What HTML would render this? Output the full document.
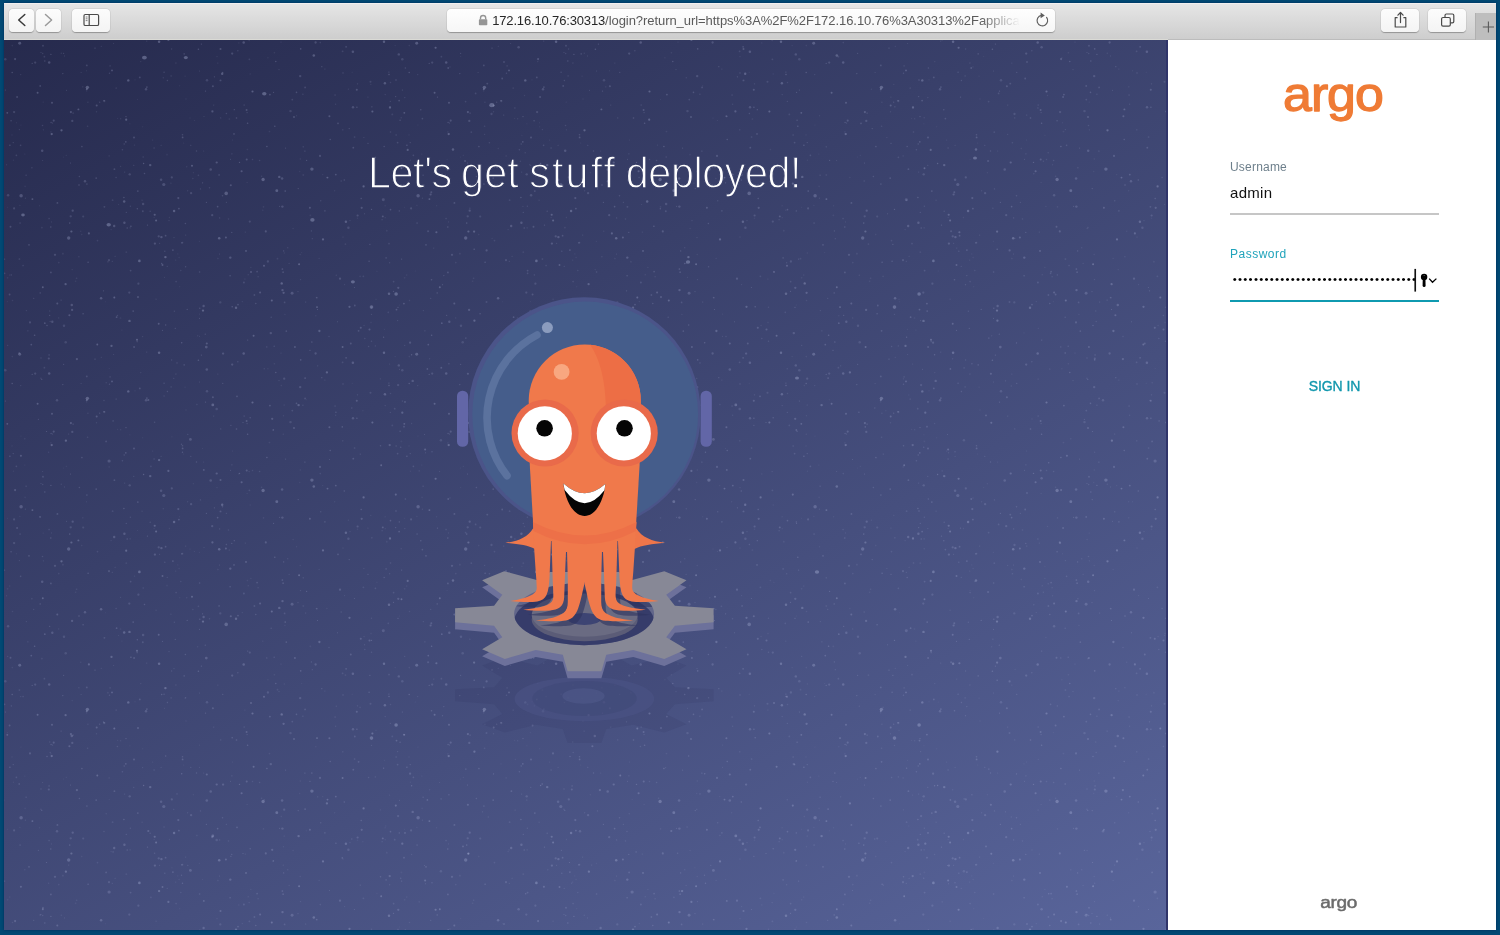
<!DOCTYPE html>
<html lang="en">
<head>
<meta charset="utf-8">
<title>Argo CD</title>
<style>
*{box-sizing:border-box}
html,body{margin:0;padding:0}
body{width:1500px;height:935px;overflow:hidden;background:#014974;font-family:"Liberation Sans",sans-serif;position:relative}
.win{position:absolute;left:4px;top:3px;width:1492px;height:927px;background:#fff;overflow:hidden;box-shadow:0 0 2.5px rgba(0,10,60,.45)}
.tb{position:absolute;left:0;top:0;width:1492px;height:37px;background:linear-gradient(#f1efef 0,#f1efef 1px,#e5e5e5 1.5px,#cecece 35.5px,#dadad5 36px,#dadad5 37px)}
.tbr{position:absolute;left:1164px;top:35.6px;width:328px;height:1.4px;background:#bcbcbc}
.btn{position:absolute;top:6px;height:23px;border-radius:4px;background:linear-gradient(#fcfcfc,#f4f4f4);box-shadow:0 0.5px 1px rgba(0,0,0,.28),0 0 0 .5px rgba(0,0,0,.06)}
.btn svg{position:absolute;left:0;top:0}
.url{position:absolute;left:443px;top:6px;width:608px;height:23px;border-radius:4px;background:linear-gradient(#fefefe,#f6f6f6);box-shadow:0 0.5px 1px rgba(0,0,0,.28),0 0 0 .5px rgba(0,0,0,.06);overflow:hidden}
.url .txt{position:absolute;left:45.2px;top:0;width:530px;height:23px;line-height:23px;font-size:13px;color:#5a5a5a;white-space:nowrap;overflow:hidden;letter-spacing:-.056px;-webkit-mask-image:linear-gradient(90deg,#000 0,#000 488px,transparent 528px);mask-image:linear-gradient(90deg,#000 0,#000 488px,transparent 528px)}
.url .txt b{font-weight:normal;color:#262626;letter-spacing:-.155px}
.plus{position:absolute;left:1471px;top:10px;width:21px;height:27px;background:#bebebe;border-left:1px solid #b0b0b0}
.left{position:absolute;left:0;top:37px;width:1164px;height:890px;background:linear-gradient(150deg,#262a4d,#59659b);overflow:hidden}
.edge{position:absolute;left:1162.4px;top:0;width:1.6px;height:890px;background:#30356a}
.stars{position:absolute;left:0;top:0;filter:blur(.35px)}
.mascot{position:absolute;left:-4px;top:-40px}
.w1{letter-spacing:-.45px}.w2{letter-spacing:.2px;margin-left:1.2px}.w3{letter-spacing:2.35px;margin-left:2.2px}.w4{letter-spacing:-.45px;margin-left:.5px}
.h1w{position:absolute;left:340px;top:100px;width:500px;height:70px;background:#000;mix-blend-mode:screen}
h1{position:absolute;margin:0;left:23.5px;top:6.7px;font-weight:normal;font-size:45px;line-height:52px;color:#fff;white-space:nowrap;word-spacing:-3.6px;-webkit-text-stroke:1.3px #000;transform:scaleX(.917);transform-origin:0 0}
.right{position:absolute;left:1164px;top:37px;width:328px;height:890px;background:#fff}
.logo{position:absolute;left:0;top:0}
.lab{position:absolute;left:62px;font-size:12px;line-height:14px;color:#6d7f8b;white-space:nowrap}
.val{position:absolute;left:62px;font-size:15px;line-height:18px;color:#111;white-space:nowrap;letter-spacing:.3px}
.ul{position:absolute;left:62px;width:209px;height:2px}
.sign{position:absolute;left:2.5px;width:328px;text-align:center;font-size:14px;color:#1197ad;top:337.5px;line-height:16px;letter-spacing:-.1px;-webkit-text-stroke:.35px #1197ad}
.pw{position:absolute;left:62px;top:227.4px;width:185.2px;height:24px;overflow:hidden;white-space:nowrap;font-size:11.5px;line-height:24px;letter-spacing:1.245px;color:#000}
.pw span{position:absolute;left:2.8px;top:0}
</style>
</head>
<body>
<div class="win">
<div class="tb">
  <div class="btn" style="left:5px;width:25px"><svg width="25" height="23"><path d="M15.8,5.5 L9.7,11 L15.8,16.5" fill="none" stroke="#3a3a3a" stroke-width="1.5" stroke-linecap="round" stroke-linejoin="round"/></svg></div>
  <div class="btn" style="left:32px;width:25px"><svg width="25" height="23"><path d="M9.5,5.5 L15.6,11 L9.5,16.5" fill="none" stroke="#9a9a9a" stroke-width="1.5" stroke-linecap="round" stroke-linejoin="round"/></svg></div>
  <div class="btn" style="left:68px;width:38px"><svg width="38" height="23"><rect x="12" y="5.5" width="14.6" height="11" rx="1.3" fill="none" stroke="#4a4a4a" stroke-width="1.2"/><path d="M17.2,5.5V16.5" stroke="#4a4a4a" stroke-width="1.2"/><path d="M13.7,8h1.8M13.7,9.8h1.8M13.7,11.6h1.8" stroke="#4a4a4a" stroke-width=".7"/></svg></div>
  <div class="url">
    <svg width="608" height="23" style="position:absolute;left:0;top:0"><path d="M33.5,10.4v-1.3a2.6,2.6 0 0 1 5.2,0v1.3" fill="none" stroke="#959595" stroke-width="1.4"/><rect x="31.9" y="10.2" width="8.4" height="6.1" rx=".8" fill="#959595"/>
    <g fill="none" stroke="#5f5f5f" stroke-width="1.2" stroke-linecap="round"><path d="M599.6,8.4 A5.3,5.3 0 1 1 594.3,6.4"/></g><path d="M593.6,3.5 L597.8,6.4 L593.6,9.3 Z" fill="#5f5f5f"/></svg>
    <div class="txt"><b>172.16.10.76:30313</b>/login?return_url=https%3A%2F%2F172.16.10.76%3A30313%2Fapplications</div>
  </div>
  <div class="btn" style="left:1377px;width:38px"><svg width="38" height="23"><path d="M16.6,8.6h-2.4v9.4h10.6v-9.4h-2.4" fill="none" stroke="#4a4a4a" stroke-width="1.2" stroke-linejoin="round"/><path d="M19.5,13.6V3.6M16.9,6.2l2.6,-2.7l2.6,2.7" fill="none" stroke="#4a4a4a" stroke-width="1.2" stroke-linecap="round" stroke-linejoin="round"/></svg></div>
  <div class="btn" style="left:1424px;width:38px"><svg width="38" height="23"><path d="M17,8.4V6.4a1.4,1.4 0 0 1 1.4,-1.4h6a1.4,1.4 0 0 1 1.4,1.4v6a1.4,1.4 0 0 1 -1.4,1.4h-2" fill="none" stroke="#4a4a4a" stroke-width="1.2"/><rect x="13.6" y="8.5" width="8.7" height="8.7" rx="1.4" fill="none" stroke="#4a4a4a" stroke-width="1.2"/></svg></div>
  <div class="tbr"></div>
  <div class="plus"><svg width="21" height="27"><path d="M12.4,8.4v11.2M6.8,14h11.2" stroke="#5a5a5a" stroke-width="1.1"/></svg></div>
</div>
<div class="left">
<svg class="stars" width="1164" height="890" viewBox="0 0 1164 890">
<defs>
<pattern id="st1" width="397" height="311" patternUnits="userSpaceOnUse"><g fill="#c3caee"><circle cx="53.3" cy="263.6" r="0.99" opacity="0.22"/><circle cx="178.4" cy="202.6" r="0.93" opacity="0.14"/><circle cx="331.8" cy="134.6" r="0.90" opacity="0.21"/><circle cx="286.5" cy="71.1" r="1.22" opacity="0.14"/><circle cx="10.1" cy="168.4" r="1.03" opacity="0.17"/><circle cx="167.6" cy="9.0" r="0.68" opacity="0.14"/><circle cx="92.5" cy="71.8" r="0.68" opacity="0.11"/><circle cx="8.5" cy="260.5" r="0.76" opacity="0.10"/><circle cx="394.0" cy="267.4" r="0.63" opacity="0.18"/><circle cx="282.3" cy="291.2" r="0.83" opacity="0.17"/><circle cx="120.4" cy="182.7" r="1.20" opacity="0.22"/><circle cx="233.8" cy="10.7" r="0.82" opacity="0.13"/><circle cx="68.7" cy="170.7" r="1.14" opacity="0.20"/><circle cx="174.3" cy="158.1" r="1.08" opacity="0.20"/><circle cx="194.4" cy="9.2" r="0.78" opacity="0.22"/><circle cx="235.5" cy="122.4" r="0.70" opacity="0.22"/><circle cx="305.9" cy="167.8" r="0.98" opacity="0.22"/><circle cx="378.1" cy="179.7" r="0.61" opacity="0.15"/><circle cx="380.0" cy="1.8" r="1.19" opacity="0.28"/><circle cx="294.0" cy="251.6" r="0.72" opacity="0.13"/><circle cx="22.3" cy="270.6" r="0.58" opacity="0.15"/><circle cx="192.5" cy="111.0" r="0.72" opacity="0.16"/><circle cx="243.1" cy="142.5" r="0.59" opacity="0.10"/><circle cx="232.0" cy="267.8" r="1.18" opacity="0.27"/><circle cx="101.4" cy="261.8" r="0.53" opacity="0.07"/><circle cx="5.8" cy="235.0" r="0.54" opacity="0.16"/><circle cx="136.7" cy="21.6" r="0.71" opacity="0.10"/><circle cx="108.3" cy="221.3" r="0.63" opacity="0.14"/><circle cx="9.4" cy="120.2" r="0.58" opacity="0.09"/><circle cx="357.2" cy="158.6" r="0.74" opacity="0.19"/><circle cx="8.3" cy="5.6" r="0.79" opacity="0.09"/><circle cx="279.7" cy="210.9" r="0.59" opacity="0.22"/><circle cx="316.7" cy="160.7" r="0.76" opacity="0.13"/><circle cx="228.6" cy="99.9" r="0.52" opacity="0.11"/><circle cx="384.3" cy="272.3" r="0.84" opacity="0.12"/><circle cx="372.9" cy="231.3" r="0.60" opacity="0.07"/><circle cx="348.9" cy="11.8" r="1.24" opacity="0.23"/><circle cx="68.1" cy="269.9" r="1.15" opacity="0.22"/><circle cx="150.1" cy="107.9" r="0.77" opacity="0.13"/><circle cx="77.1" cy="32.5" r="0.62" opacity="0.14"/><circle cx="129.2" cy="271.1" r="0.91" opacity="0.17"/><circle cx="130.1" cy="307.0" r="1.02" opacity="0.17"/><circle cx="267.8" cy="260.5" r="1.02" opacity="0.28"/><circle cx="272.8" cy="150.7" r="1.42" opacity="0.28"/><circle cx="33.6" cy="52.8" r="0.97" opacity="0.26"/><circle cx="238.3" cy="261.6" r="0.64" opacity="0.11"/><circle cx="344.4" cy="187.8" r="1.21" opacity="0.16"/><circle cx="218.8" cy="32.4" r="0.53" opacity="0.20"/><circle cx="312.9" cy="257.7" r="0.75" opacity="0.19"/><circle cx="150.1" cy="177.5" r="0.53" opacity="0.11"/><circle cx="353.6" cy="175.5" r="1.06" opacity="0.18"/><circle cx="312.4" cy="257.4" r="0.77" opacity="0.08"/><circle cx="45.7" cy="275.3" r="0.60" opacity="0.22"/><circle cx="167.1" cy="35.9" r="0.60" opacity="0.18"/><circle cx="40.8" cy="283.2" r="0.89" opacity="0.21"/><circle cx="116.7" cy="78.8" r="0.54" opacity="0.17"/><circle cx="15.7" cy="3.3" r="1.45" opacity="0.26"/><circle cx="178.6" cy="97.4" r="0.87" opacity="0.22"/><circle cx="385.0" cy="34.6" r="0.75" opacity="0.22"/><circle cx="215.5" cy="214.0" r="0.60" opacity="0.15"/><circle cx="122.0" cy="76.6" r="0.61" opacity="0.22"/><circle cx="177.8" cy="202.8" r="0.88" opacity="0.13"/><circle cx="121.8" cy="101.8" r="0.84" opacity="0.20"/><circle cx="120.2" cy="104.0" r="0.73" opacity="0.16"/><circle cx="97.3" cy="6.3" r="0.53" opacity="0.15"/><circle cx="28.2" cy="23.4" r="0.62" opacity="0.19"/><circle cx="195.8" cy="268.3" r="0.70" opacity="0.19"/><circle cx="30.6" cy="295.2" r="0.81" opacity="0.22"/><circle cx="326.2" cy="99.5" r="0.71" opacity="0.21"/><circle cx="116.5" cy="278.0" r="0.86" opacity="0.07"/><circle cx="125.5" cy="280.9" r="1.22" opacity="0.27"/><circle cx="296.2" cy="214.5" r="0.67" opacity="0.09"/><circle cx="283.8" cy="207.7" r="0.53" opacity="0.21"/><circle cx="320.9" cy="170.8" r="0.84" opacity="0.14"/><circle cx="157.1" cy="105.3" r="0.51" opacity="0.17"/><circle cx="165.4" cy="177.5" r="0.64" opacity="0.09"/><circle cx="49.7" cy="80.6" r="1.04" opacity="0.20"/><circle cx="243.1" cy="72.6" r="0.71" opacity="0.15"/><circle cx="257.6" cy="136.3" r="0.79" opacity="0.11"/><circle cx="196.5" cy="148.9" r="0.66" opacity="0.15"/><circle cx="360.1" cy="285.4" r="0.76" opacity="0.08"/><circle cx="28.4" cy="159.1" r="0.96" opacity="0.26"/><circle cx="350.6" cy="97.0" r="0.84" opacity="0.13"/><circle cx="278.4" cy="229.0" r="0.84" opacity="0.20"/><circle cx="381.2" cy="177.7" r="0.60" opacity="0.10"/><circle cx="226.1" cy="235.7" r="0.77" opacity="0.18"/><circle cx="138.1" cy="160.2" r="0.79" opacity="0.08"/><circle cx="389.5" cy="251.3" r="0.61" opacity="0.21"/><circle cx="380.9" cy="43.3" r="1.19" opacity="0.25"/><circle cx="278.1" cy="138.4" r="1.24" opacity="0.20"/><circle cx="318.7" cy="134.6" r="0.63" opacity="0.09"/><circle cx="360.8" cy="298.4" r="0.74" opacity="0.13"/><circle cx="46.9" cy="91.9" r="0.80" opacity="0.07"/><circle cx="75.4" cy="136.5" r="0.75" opacity="0.16"/><circle cx="331.6" cy="64.3" r="0.72" opacity="0.11"/><circle cx="232.5" cy="78.0" r="0.82" opacity="0.19"/><circle cx="386.5" cy="169.6" r="0.84" opacity="0.19"/><circle cx="226.5" cy="119.2" r="0.54" opacity="0.19"/><circle cx="46.9" cy="232.4" r="0.89" opacity="0.18"/><circle cx="386.5" cy="42.5" r="0.73" opacity="0.12"/><circle cx="199.7" cy="111.0" r="0.50" opacity="0.14"/><circle cx="178.5" cy="94.8" r="0.81" opacity="0.17"/><circle cx="195.4" cy="201.4" r="0.58" opacity="0.07"/><circle cx="110.2" cy="186.0" r="1.19" opacity="0.22"/><circle cx="391.8" cy="143.6" r="1.04" opacity="0.26"/><circle cx="392.1" cy="95.0" r="0.75" opacity="0.15"/><circle cx="142.7" cy="1.1" r="0.67" opacity="0.13"/><circle cx="341.9" cy="181.8" r="1.21" opacity="0.26"/><circle cx="195.6" cy="231.9" r="0.76" opacity="0.16"/><circle cx="161.6" cy="195.7" r="0.87" opacity="0.19"/><circle cx="336.0" cy="238.7" r="1.11" opacity="0.20"/><circle cx="105.0" cy="220.2" r="1.09" opacity="0.16"/><circle cx="330.7" cy="150.7" r="0.52" opacity="0.15"/><circle cx="295.7" cy="131.4" r="0.76" opacity="0.07"/><circle cx="201.3" cy="294.2" r="0.66" opacity="0.17"/><circle cx="240.2" cy="65.0" r="0.85" opacity="0.11"/><circle cx="29.7" cy="258.3" r="0.65" opacity="0.15"/><circle cx="292.5" cy="52.4" r="0.79" opacity="0.19"/><circle cx="107.1" cy="189.6" r="0.72" opacity="0.10"/><circle cx="313.5" cy="269.5" r="0.59" opacity="0.21"/><circle cx="280.6" cy="262.4" r="0.86" opacity="0.16"/><circle cx="125.7" cy="134.3" r="1.17" opacity="0.17"/><circle cx="248.5" cy="51.5" r="1.06" opacity="0.29"/><circle cx="289.1" cy="188.5" r="0.71" opacity="0.09"/><circle cx="54.8" cy="222.6" r="0.80" opacity="0.11"/><circle cx="285.1" cy="223.4" r="0.54" opacity="0.13"/><circle cx="195.5" cy="31.1" r="0.52" opacity="0.16"/><circle cx="352.9" cy="67.3" r="0.78" opacity="0.19"/><circle cx="382.8" cy="190.7" r="0.84" opacity="0.09"/><circle cx="275.0" cy="29.6" r="0.70" opacity="0.13"/><circle cx="66.9" cy="72.1" r="1.06" opacity="0.23"/><circle cx="84.1" cy="222.3" r="0.74" opacity="0.21"/><circle cx="394.8" cy="14.4" r="1.20" opacity="0.19"/><circle cx="152.1" cy="180.5" r="1.04" opacity="0.28"/><circle cx="301.1" cy="47.4" r="0.91" opacity="0.16"/><circle cx="263.9" cy="17.8" r="0.55" opacity="0.14"/><circle cx="333.5" cy="281.8" r="0.52" opacity="0.20"/><circle cx="17.0" cy="85.1" r="0.54" opacity="0.07"/><circle cx="253.1" cy="231.6" r="0.84" opacity="0.17"/><circle cx="154.7" cy="196.3" r="1.12" opacity="0.18"/><circle cx="23.9" cy="290.8" r="0.64" opacity="0.16"/><circle cx="222.4" cy="162.4" r="0.64" opacity="0.13"/><circle cx="79.1" cy="273.7" r="0.76" opacity="0.18"/><circle cx="295.1" cy="224.3" r="0.99" opacity="0.30"/><circle cx="60.0" cy="285.7" r="1.20" opacity="0.15"/><circle cx="36.2" cy="252.9" r="0.65" opacity="0.22"/><circle cx="15.9" cy="165.3" r="0.55" opacity="0.13"/><circle cx="280.9" cy="274.4" r="0.71" opacity="0.08"/><circle cx="317.8" cy="26.7" r="0.65" opacity="0.18"/><circle cx="124.3" cy="40.4" r="1.18" opacity="0.28"/><circle cx="120.6" cy="132.1" r="0.72" opacity="0.12"/><circle cx="134.4" cy="243.7" r="1.10" opacity="0.16"/><circle cx="259.1" cy="139.5" r="1.66" opacity="0.30"/><circle cx="278.4" cy="166.6" r="1.19" opacity="0.19"/><circle cx="62.3" cy="115.2" r="0.54" opacity="0.12"/><circle cx="228.2" cy="13.6" r="1.13" opacity="0.19"/><circle cx="118.4" cy="109.7" r="0.80" opacity="0.15"/><circle cx="208.9" cy="46.3" r="1.01" opacity="0.19"/><circle cx="27.3" cy="304.6" r="0.87" opacity="0.21"/><circle cx="385.0" cy="253.7" r="1.22" opacity="0.27"/><circle cx="53.4" cy="162.9" r="0.90" opacity="0.19"/><circle cx="279.1" cy="232.2" r="0.88" opacity="0.17"/><circle cx="159.8" cy="144.5" r="1.57" opacity="0.20"/><circle cx="58.9" cy="213.7" r="0.86" opacity="0.10"/><circle cx="163.2" cy="226.4" r="0.54" opacity="0.15"/><circle cx="105.5" cy="33.3" r="0.75" opacity="0.15"/><circle cx="31.2" cy="22.6" r="1.13" opacity="0.17"/><circle cx="342.1" cy="6.8" r="0.84" opacity="0.18"/><circle cx="112.6" cy="277.2" r="0.85" opacity="0.20"/><circle cx="168.9" cy="210.1" r="0.88" opacity="0.19"/><circle cx="288.1" cy="253.2" r="1.43" opacity="0.21"/><circle cx="296.5" cy="239.6" r="0.69" opacity="0.13"/><circle cx="350.4" cy="247.6" r="0.52" opacity="0.20"/><circle cx="182.0" cy="59.0" r="0.78" opacity="0.07"/><circle cx="47.7" cy="94.1" r="1.16" opacity="0.30"/><circle cx="215.6" cy="177.9" r="0.71" opacity="0.15"/><circle cx="325.0" cy="296.5" r="0.75" opacity="0.12"/><circle cx="119.9" cy="157.5" r="0.72" opacity="0.22"/><circle cx="64.7" cy="198.0" r="1.67" opacity="0.26"/><circle cx="146.2" cy="125.1" r="1.21" opacity="0.25"/><circle cx="356.8" cy="287.7" r="1.03" opacity="0.21"/><circle cx="316.0" cy="115.9" r="1.07" opacity="0.19"/><circle cx="181.1" cy="36.2" r="0.67" opacity="0.07"/><circle cx="68.3" cy="80.9" r="1.11" opacity="0.19"/><circle cx="396.1" cy="80.2" r="0.80" opacity="0.17"/><circle cx="172.1" cy="241.6" r="0.79" opacity="0.14"/><circle cx="385.7" cy="222.7" r="0.55" opacity="0.21"/><circle cx="91.0" cy="8.1" r="0.69" opacity="0.21"/><circle cx="158.5" cy="225.0" r="0.93" opacity="0.24"/><circle cx="395.3" cy="170.9" r="0.64" opacity="0.21"/><circle cx="384.9" cy="32.1" r="0.67" opacity="0.17"/><circle cx="47.1" cy="82.5" r="0.69" opacity="0.19"/><circle cx="340.6" cy="244.6" r="0.53" opacity="0.13"/><circle cx="265.5" cy="91.5" r="0.86" opacity="0.09"/><circle cx="339.0" cy="32.9" r="0.86" opacity="0.10"/><circle cx="206.7" cy="129.6" r="1.25" opacity="0.19"/><circle cx="195.5" cy="278.3" r="0.59" opacity="0.18"/><circle cx="133.8" cy="151.1" r="0.90" opacity="0.17"/><circle cx="367.5" cy="301.3" r="0.72" opacity="0.14"/><circle cx="301.7" cy="262.0" r="0.61" opacity="0.18"/><circle cx="163.4" cy="40.5" r="0.72" opacity="0.16"/><circle cx="381.1" cy="165.7" r="0.56" opacity="0.13"/><circle cx="111.1" cy="216.3" r="0.59" opacity="0.13"/><circle cx="186.8" cy="105.2" r="0.57" opacity="0.20"/><circle cx="275.6" cy="166.3" r="0.63" opacity="0.17"/><circle cx="256.1" cy="252.5" r="1.01" opacity="0.22"/><circle cx="131.0" cy="39.8" r="0.60" opacity="0.08"/><circle cx="213.9" cy="218.6" r="0.77" opacity="0.10"/><circle cx="79.2" cy="176.5" r="1.05" opacity="0.14"/><circle cx="8.0" cy="94.9" r="0.53" opacity="0.10"/><circle cx="270.2" cy="306.3" r="0.74" opacity="0.15"/><circle cx="9.2" cy="102.6" r="0.60" opacity="0.19"/><circle cx="270.4" cy="12.8" r="0.79" opacity="0.09"/><circle cx="125.9" cy="83.8" r="0.51" opacity="0.09"/><circle cx="158.5" cy="290.4" r="0.60" opacity="0.17"/><circle cx="108.6" cy="160.2" r="0.88" opacity="0.12"/><circle cx="319.0" cy="199.4" r="1.11" opacity="0.28"/><circle cx="160.8" cy="211.2" r="0.71" opacity="0.15"/><circle cx="212.7" cy="122.5" r="1.12" opacity="0.23"/><circle cx="21.4" cy="158.2" r="0.59" opacity="0.14"/><circle cx="216.7" cy="77.9" r="0.71" opacity="0.14"/><circle cx="160.1" cy="32.3" r="0.76" opacity="0.15"/><circle cx="216.3" cy="262.4" r="1.14" opacity="0.14"/><circle cx="122.3" cy="212.2" r="0.87" opacity="0.09"/><circle cx="349.0" cy="67.3" r="1.20" opacity="0.19"/><circle cx="352.8" cy="49.7" r="1.03" opacity="0.21"/><circle cx="46.8" cy="186.9" r="0.77" opacity="0.19"/><circle cx="239.7" cy="2.5" r="1.22" opacity="0.24"/><circle cx="150.7" cy="174.8" r="1.06" opacity="0.26"/><circle cx="237.6" cy="131.3" r="1.04" opacity="0.24"/><circle cx="21.1" cy="146.4" r="0.78" opacity="0.07"/><circle cx="16.7" cy="34.6" r="0.70" opacity="0.12"/><circle cx="107.5" cy="305.9" r="1.13" opacity="0.27"/><circle cx="325.4" cy="76.2" r="0.98" opacity="0.23"/><circle cx="142.0" cy="49.3" r="1.22" opacity="0.19"/><circle cx="349.3" cy="107.7" r="0.90" opacity="0.19"/><circle cx="22.1" cy="135.2" r="0.62" opacity="0.19"/><circle cx="175.1" cy="217.5" r="0.71" opacity="0.08"/><circle cx="267.2" cy="277.2" r="0.76" opacity="0.14"/><circle cx="135.4" cy="220.9" r="1.31" opacity="0.31"/><circle cx="152.1" cy="259.3" r="0.79" opacity="0.08"/><circle cx="133.2" cy="301.6" r="0.81" opacity="0.14"/><circle cx="187.1" cy="153.2" r="1.15" opacity="0.17"/><circle cx="174.9" cy="168.6" r="0.87" opacity="0.20"/><circle cx="59.5" cy="117.0" r="0.51" opacity="0.08"/><circle cx="72.6" cy="238.3" r="0.82" opacity="0.11"/><circle cx="61.7" cy="302.3" r="1.23" opacity="0.14"/><circle cx="157.4" cy="197.1" r="1.22" opacity="0.23"/><circle cx="155.1" cy="1.7" r="1.24" opacity="0.29"/><circle cx="262.9" cy="106.5" r="0.81" opacity="0.21"/><circle cx="381.2" cy="54.6" r="0.71" opacity="0.13"/><circle cx="315.4" cy="291.0" r="1.15" opacity="0.25"/><circle cx="259.5" cy="166.9" r="0.81" opacity="0.09"/><circle cx="255.6" cy="120.4" r="0.76" opacity="0.14"/><circle cx="388.3" cy="74.4" r="0.88" opacity="0.12"/><circle cx="110.4" cy="129.2" r="0.89" opacity="0.18"/><circle cx="126.4" cy="166.3" r="0.70" opacity="0.13"/><circle cx="66.5" cy="123.0" r="0.58" opacity="0.19"/><circle cx="142.9" cy="47.1" r="0.84" opacity="0.19"/><circle cx="246.9" cy="227.4" r="0.56" opacity="0.11"/><circle cx="138.7" cy="86.8" r="0.56" opacity="0.09"/><circle cx="100.3" cy="61.1" r="1.09" opacity="0.17"/><circle cx="170.4" cy="271.2" r="0.72" opacity="0.13"/><circle cx="77.7" cy="194.5" r="0.81" opacity="0.08"/><circle cx="296.3" cy="119.0" r="0.74" opacity="0.09"/><circle cx="213.8" cy="23.1" r="0.65" opacity="0.11"/><circle cx="262.7" cy="306.9" r="0.84" opacity="0.10"/><circle cx="281.6" cy="108.1" r="0.54" opacity="0.19"/><circle cx="82.9" cy="144.1" r="0.82" opacity="0.16"/><circle cx="244.2" cy="234.7" r="0.52" opacity="0.19"/><circle cx="125.3" cy="252.6" r="1.12" opacity="0.16"/><circle cx="339.0" cy="197.0" r="0.58" opacity="0.15"/><circle cx="48.3" cy="281.8" r="1.19" opacity="0.20"/><circle cx="366.5" cy="41.7" r="0.99" opacity="0.14"/><circle cx="48.0" cy="62.7" r="1.03" opacity="0.22"/><circle cx="243.6" cy="83.2" r="0.77" opacity="0.21"/><circle cx="199.6" cy="266.0" r="1.17" opacity="0.21"/><circle cx="108.0" cy="30.4" r="0.95" opacity="0.23"/><circle cx="180.2" cy="13.9" r="0.83" opacity="0.15"/><circle cx="367.0" cy="282.4" r="0.77" opacity="0.08"/><circle cx="167.8" cy="137.4" r="1.11" opacity="0.17"/><circle cx="202.4" cy="162.3" r="0.64" opacity="0.20"/><circle cx="389.6" cy="241.6" r="0.86" opacity="0.14"/><circle cx="331.1" cy="55.0" r="0.86" opacity="0.11"/><circle cx="17.1" cy="155.8" r="1.72" opacity="0.24"/><circle cx="394.3" cy="247.8" r="1.13" opacity="0.20"/><circle cx="359.6" cy="146.4" r="1.09" opacity="0.29"/><circle cx="189.4" cy="132.7" r="0.63" opacity="0.09"/><circle cx="234.0" cy="264.6" r="0.85" opacity="0.19"/><circle cx="307.9" cy="129.1" r="1.70" opacity="0.26"/><circle cx="45.1" cy="178.5" r="0.86" opacity="0.12"/><circle cx="146.2" cy="171.3" r="0.73" opacity="0.14"/><circle cx="251.8" cy="263.5" r="0.70" opacity="0.19"/><circle cx="1.4" cy="50.0" r="0.59" opacity="0.20"/><circle cx="58.8" cy="33.6" r="0.70" opacity="0.19"/><circle cx="395.3" cy="264.9" r="0.52" opacity="0.08"/><circle cx="250.4" cy="255.0" r="0.89" opacity="0.15"/><circle cx="227.8" cy="192.4" r="0.57" opacity="0.21"/><circle cx="106.1" cy="25.9" r="0.79" opacity="0.11"/><circle cx="83.6" cy="86.2" r="0.80" opacity="0.12"/><circle cx="346.8" cy="303.5" r="0.93" opacity="0.19"/><circle cx="367.5" cy="267.3" r="0.68" opacity="0.12"/><circle cx="296.7" cy="8.9" r="0.80" opacity="0.20"/><circle cx="16.1" cy="183.0" r="0.85" opacity="0.13"/><circle cx="386.3" cy="61.4" r="0.55" opacity="0.16"/><circle cx="48.6" cy="82.9" r="0.52" opacity="0.21"/><circle cx="133.0" cy="299.8" r="0.98" opacity="0.29"/><circle cx="3.7" cy="305.3" r="0.60" opacity="0.15"/><circle cx="3.6" cy="237.8" r="0.83" opacity="0.08"/><circle cx="209.7" cy="65.1" r="0.70" opacity="0.13"/><circle cx="155.6" cy="203.2" r="0.57" opacity="0.17"/><circle cx="117.9" cy="290.1" r="0.69" opacity="0.07"/><circle cx="8.2" cy="32.6" r="0.77" opacity="0.21"/><circle cx="171.7" cy="220.1" r="0.53" opacity="0.13"/><circle cx="278.5" cy="250.1" r="1.19" opacity="0.23"/><circle cx="218.5" cy="155.8" r="0.77" opacity="0.16"/><circle cx="340.3" cy="140.0" r="0.83" opacity="0.17"/><circle cx="208.2" cy="175.2" r="1.11" opacity="0.18"/><circle cx="123.2" cy="188.0" r="0.68" opacity="0.20"/><circle cx="92.2" cy="138.1" r="0.87" opacity="0.17"/><circle cx="248.5" cy="119.4" r="0.76" opacity="0.12"/><circle cx="311.6" cy="2.5" r="1.16" opacity="0.19"/><circle cx="5.9" cy="105.2" r="0.81" opacity="0.20"/><circle cx="82.8" cy="25.4" r="0.90" opacity="0.17"/><circle cx="51.0" cy="214.8" r="1.11" opacity="0.18"/><circle cx="382.1" cy="217.9" r="0.81" opacity="0.15"/><circle cx="227.9" cy="113.8" r="0.67" opacity="0.15"/><circle cx="183.2" cy="269.4" r="0.58" opacity="0.21"/><circle cx="241.3" cy="192.1" r="0.60" opacity="0.13"/><circle cx="83.4" cy="47.3" r="1.67" opacity="0.30"/><circle cx="0.6" cy="219.1" r="0.70" opacity="0.17"/><circle cx="12.4" cy="115.3" r="0.85" opacity="0.15"/><circle cx="126.1" cy="187.8" r="0.62" opacity="0.15"/><circle cx="109.6" cy="3.5" r="0.53" opacity="0.14"/><circle cx="199.0" cy="270.6" r="1.16" opacity="0.30"/><circle cx="105.1" cy="115.9" r="0.54" opacity="0.15"/><circle cx="203.0" cy="40.3" r="1.24" opacity="0.15"/><circle cx="1.3" cy="19.2" r="1.20" opacity="0.15"/><circle cx="3.6" cy="167.3" r="0.51" opacity="0.07"/><circle cx="83.9" cy="62.2" r="0.72" opacity="0.11"/><circle cx="92.7" cy="65.5" r="0.98" opacity="0.23"/><circle cx="179.7" cy="103.1" r="0.51" opacity="0.10"/><circle cx="254.1" cy="236.8" r="0.57" opacity="0.21"/><circle cx="38.8" cy="247.2" r="0.95" opacity="0.27"/><circle cx="59.6" cy="13.4" r="0.64" opacity="0.16"/><circle cx="175.7" cy="246.8" r="0.55" opacity="0.10"/><circle cx="296.2" cy="36.1" r="1.18" opacity="0.18"/><circle cx="113.6" cy="78.4" r="0.60" opacity="0.07"/><circle cx="100.0" cy="60.6" r="0.68" opacity="0.20"/><circle cx="261.8" cy="191.4" r="1.04" opacity="0.21"/><circle cx="97.1" cy="258.2" r="1.22" opacity="0.24"/><circle cx="45.2" cy="22.5" r="1.21" opacity="0.23"/><circle cx="365.5" cy="289.5" r="1.03" opacity="0.21"/><circle cx="139.7" cy="123.2" r="0.51" opacity="0.09"/><circle cx="66.7" cy="176.3" r="1.15" opacity="0.16"/><circle cx="181.7" cy="195.1" r="0.53" opacity="0.16"/><circle cx="93.5" cy="200.6" r="0.84" opacity="0.12"/><circle cx="170.1" cy="171.0" r="1.22" opacity="0.28"/><circle cx="271.8" cy="21.5" r="0.71" opacity="0.22"/><circle cx="288.3" cy="59.6" r="0.88" opacity="0.15"/><circle cx="345.5" cy="266.8" r="1.12" opacity="0.25"/><circle cx="135.8" cy="37.4" r="0.91" opacity="0.18"/><circle cx="243.7" cy="300.1" r="0.60" opacity="0.20"/><circle cx="129.8" cy="125.3" r="0.52" opacity="0.21"/><circle cx="277.0" cy="2.1" r="0.55" opacity="0.13"/><circle cx="353.5" cy="43.8" r="0.62" opacity="0.15"/><circle cx="357.7" cy="167.8" r="1.09" opacity="0.21"/><circle cx="346.0" cy="180.6" r="0.70" opacity="0.12"/><circle cx="171.9" cy="23.1" r="0.81" opacity="0.09"/><circle cx="82.7" cy="50.9" r="0.52" opacity="0.12"/><circle cx="242.0" cy="210.9" r="0.93" opacity="0.24"/><circle cx="77.9" cy="106.5" r="0.84" opacity="0.17"/><circle cx="391.2" cy="5.6" r="0.69" opacity="0.08"/><circle cx="20.8" cy="114.1" r="0.55" opacity="0.08"/><circle cx="126.6" cy="230.6" r="0.90" opacity="0.16"/><circle cx="353.5" cy="178.2" r="0.67" opacity="0.08"/><circle cx="25.0" cy="204.8" r="0.91" opacity="0.17"/><circle cx="130.0" cy="97.4" r="0.99" opacity="0.19"/><circle cx="193.6" cy="295.7" r="0.75" opacity="0.08"/><circle cx="171.3" cy="288.4" r="0.64" opacity="0.17"/><circle cx="224.5" cy="179.1" r="0.77" opacity="0.12"/><circle cx="139.6" cy="123.5" r="0.73" opacity="0.20"/><circle cx="157.1" cy="139.7" r="1.24" opacity="0.18"/><circle cx="290.0" cy="77.0" r="0.91" opacity="0.22"/><circle cx="226.3" cy="217.6" r="1.18" opacity="0.23"/><circle cx="197.4" cy="4.1" r="0.72" opacity="0.18"/><circle cx="65.7" cy="183.1" r="0.79" opacity="0.19"/><circle cx="173.8" cy="213.9" r="0.62" opacity="0.08"/><circle cx="300.9" cy="111.1" r="0.68" opacity="0.19"/><circle cx="378.8" cy="176.4" r="0.96" opacity="0.22"/><circle cx="3.3" cy="72.8" r="0.92" opacity="0.24"/><circle cx="202.3" cy="307.1" r="1.36" opacity="0.22"/><circle cx="393.6" cy="102.6" r="0.86" opacity="0.16"/><circle cx="122.3" cy="172.4" r="0.68" opacity="0.15"/><circle cx="67.4" cy="191.5" r="1.11" opacity="0.27"/><circle cx="112.2" cy="48.1" r="0.89" opacity="0.09"/><circle cx="150.9" cy="203.6" r="1.12" opacity="0.21"/><circle cx="323.5" cy="137.6" r="0.92" opacity="0.26"/><circle cx="38.6" cy="120.5" r="0.57" opacity="0.14"/><circle cx="338.6" cy="11.3" r="0.89" opacity="0.14"/><circle cx="154.7" cy="283.8" r="0.96" opacity="0.24"/><circle cx="71.6" cy="241.2" r="0.82" opacity="0.08"/><circle cx="368.4" cy="71.5" r="1.05" opacity="0.28"/><circle cx="40.4" cy="16.7" r="0.87" opacity="0.14"/><circle cx="201.5" cy="51.1" r="0.67" opacity="0.20"/><circle cx="294.2" cy="148.6" r="0.56" opacity="0.22"/><circle cx="242.6" cy="70.0" r="0.98" opacity="0.21"/><circle cx="348.2" cy="32.2" r="0.52" opacity="0.09"/><circle cx="148.7" cy="100.0" r="0.51" opacity="0.14"/><circle cx="176.8" cy="230.4" r="0.73" opacity="0.12"/><circle cx="298.9" cy="54.2" r="0.68" opacity="0.14"/><circle cx="213.6" cy="166.7" r="0.83" opacity="0.21"/><circle cx="221.9" cy="197.6" r="1.01" opacity="0.23"/><circle cx="183.6" cy="150.7" r="0.71" opacity="0.10"/><circle cx="95.7" cy="62.2" r="0.60" opacity="0.19"/><circle cx="359.4" cy="236.3" r="0.88" opacity="0.12"/><circle cx="143.5" cy="185.1" r="0.66" opacity="0.19"/><circle cx="338.8" cy="89.8" r="0.66" opacity="0.17"/><circle cx="265.9" cy="54.6" r="0.86" opacity="0.21"/><circle cx="239.9" cy="242.6" r="0.98" opacity="0.15"/><circle cx="242.7" cy="119.6" r="1.00" opacity="0.21"/><circle cx="320.9" cy="29.0" r="0.56" opacity="0.15"/><circle cx="290.9" cy="307.0" r="0.95" opacity="0.21"/><circle cx="215.2" cy="198.3" r="1.24" opacity="0.29"/><circle cx="82.8" cy="49.3" r="0.96" opacity="0.29"/><circle cx="47.6" cy="181.9" r="0.55" opacity="0.12"/><circle cx="315.1" cy="218.4" r="0.55" opacity="0.12"/><circle cx="69.1" cy="73.1" r="0.70" opacity="0.21"/><circle cx="35.6" cy="165.7" r="0.56" opacity="0.12"/><circle cx="54.7" cy="277.9" r="0.53" opacity="0.14"/></g></pattern>
<pattern id="st2" width="523" height="431" patternUnits="userSpaceOnUse" patternTransform="translate(60 35)"><g fill="#c3caee"><circle cx="500.0" cy="408.5" r="0.53" opacity="0.20"/><circle cx="384.9" cy="288.7" r="0.74" opacity="0.16"/><circle cx="304.0" cy="68.3" r="0.66" opacity="0.18"/><circle cx="520.3" cy="409.2" r="0.68" opacity="0.11"/><circle cx="18.8" cy="11.8" r="0.63" opacity="0.13"/><circle cx="466.4" cy="226.6" r="0.59" opacity="0.07"/><circle cx="170.0" cy="58.9" r="0.90" opacity="0.17"/><circle cx="95.1" cy="385.1" r="1.16" opacity="0.29"/><circle cx="399.0" cy="340.4" r="0.89" opacity="0.21"/><circle cx="84.3" cy="325.0" r="1.06" opacity="0.22"/><circle cx="256.3" cy="398.6" r="0.83" opacity="0.12"/><circle cx="461.7" cy="387.8" r="0.73" opacity="0.21"/><circle cx="378.5" cy="209.7" r="0.63" opacity="0.17"/><circle cx="86.9" cy="391.3" r="0.86" opacity="0.12"/><circle cx="500.7" cy="304.4" r="0.71" opacity="0.17"/><circle cx="307.5" cy="134.4" r="0.70" opacity="0.21"/><circle cx="326.0" cy="32.5" r="1.15" opacity="0.29"/><circle cx="100.1" cy="321.0" r="0.76" opacity="0.11"/><circle cx="118.5" cy="377.3" r="0.71" opacity="0.20"/><circle cx="128.0" cy="90.7" r="1.05" opacity="0.25"/><circle cx="16.7" cy="156.2" r="0.77" opacity="0.08"/><circle cx="499.2" cy="10.9" r="0.91" opacity="0.18"/><circle cx="425.4" cy="67.7" r="0.78" opacity="0.13"/><circle cx="22.6" cy="426.7" r="0.51" opacity="0.12"/><circle cx="321.8" cy="320.0" r="0.63" opacity="0.07"/><circle cx="234.6" cy="330.1" r="1.22" opacity="0.26"/><circle cx="451.1" cy="304.0" r="0.59" opacity="0.17"/><circle cx="165.4" cy="44.0" r="0.85" opacity="0.09"/><circle cx="305.9" cy="169.4" r="0.56" opacity="0.21"/><circle cx="135.5" cy="261.2" r="0.51" opacity="0.15"/><circle cx="73.5" cy="24.5" r="0.56" opacity="0.08"/><circle cx="332.1" cy="219.1" r="1.77" opacity="0.32"/><circle cx="121.6" cy="191.7" r="0.74" opacity="0.16"/><circle cx="418.5" cy="305.8" r="0.67" opacity="0.15"/><circle cx="2.5" cy="15.3" r="0.54" opacity="0.18"/><circle cx="126.0" cy="43.0" r="0.59" opacity="0.10"/><circle cx="272.3" cy="200.2" r="0.76" opacity="0.10"/><circle cx="474.1" cy="415.1" r="1.05" opacity="0.22"/><circle cx="303.9" cy="22.1" r="0.71" opacity="0.10"/><circle cx="49.1" cy="345.9" r="0.71" opacity="0.21"/><circle cx="319.3" cy="124.8" r="1.49" opacity="0.18"/><circle cx="358.4" cy="43.6" r="0.84" opacity="0.17"/><circle cx="8.2" cy="194.6" r="0.69" opacity="0.10"/><circle cx="307.9" cy="31.8" r="0.65" opacity="0.21"/><circle cx="40.0" cy="325.4" r="0.73" opacity="0.13"/><circle cx="242.3" cy="324.8" r="0.55" opacity="0.09"/><circle cx="42.1" cy="366.4" r="0.88" opacity="0.17"/><circle cx="12.9" cy="284.1" r="1.15" opacity="0.22"/><circle cx="187.0" cy="197.0" r="0.99" opacity="0.22"/><circle cx="249.8" cy="411.5" r="1.23" opacity="0.27"/><circle cx="155.2" cy="99.8" r="0.60" opacity="0.13"/><circle cx="355.2" cy="395.9" r="0.83" opacity="0.08"/><circle cx="186.2" cy="430.0" r="0.67" opacity="0.08"/><circle cx="45.1" cy="386.0" r="1.62" opacity="0.20"/><circle cx="155.0" cy="99.9" r="0.77" opacity="0.14"/><circle cx="274.0" cy="48.3" r="0.88" opacity="0.18"/><circle cx="50.3" cy="222.6" r="0.99" opacity="0.28"/><circle cx="241.1" cy="303.1" r="0.90" opacity="0.19"/><circle cx="299.9" cy="62.4" r="0.51" opacity="0.16"/><circle cx="461.2" cy="77.8" r="0.69" opacity="0.13"/><circle cx="371.6" cy="403.7" r="1.07" opacity="0.29"/><circle cx="173.0" cy="321.4" r="0.80" opacity="0.20"/><circle cx="117.7" cy="267.8" r="0.77" opacity="0.22"/><circle cx="332.0" cy="5.0" r="0.78" opacity="0.20"/><circle cx="340.0" cy="351.7" r="0.88" opacity="0.18"/><circle cx="317.2" cy="390.2" r="0.94" opacity="0.27"/><circle cx="401.1" cy="86.0" r="1.11" opacity="0.17"/><circle cx="420.6" cy="59.4" r="0.67" opacity="0.11"/><circle cx="296.1" cy="201.3" r="0.89" opacity="0.08"/><circle cx="1.6" cy="209.2" r="1.13" opacity="0.26"/><circle cx="253.7" cy="290.8" r="0.61" opacity="0.15"/><circle cx="14.4" cy="34.4" r="0.96" opacity="0.26"/><circle cx="410.2" cy="174.3" r="0.81" opacity="0.20"/><circle cx="70.5" cy="70.1" r="0.69" opacity="0.11"/><circle cx="5.4" cy="240.2" r="1.03" opacity="0.23"/><circle cx="200.0" cy="190.8" r="1.01" opacity="0.24"/><circle cx="253.0" cy="232.1" r="0.93" opacity="0.27"/><circle cx="159.1" cy="278.6" r="1.13" opacity="0.20"/><circle cx="439.7" cy="40.1" r="0.66" opacity="0.15"/><circle cx="445.0" cy="343.9" r="0.62" opacity="0.10"/><circle cx="239.3" cy="100.0" r="0.88" opacity="0.09"/><circle cx="428.1" cy="163.4" r="0.63" opacity="0.08"/><circle cx="239.2" cy="71.8" r="0.62" opacity="0.20"/><circle cx="482.1" cy="190.5" r="0.87" opacity="0.12"/><circle cx="52.1" cy="102.5" r="0.77" opacity="0.13"/><circle cx="186.2" cy="342.7" r="0.82" opacity="0.16"/><circle cx="209.3" cy="354.9" r="0.85" opacity="0.21"/><circle cx="262.9" cy="297.4" r="1.16" opacity="0.26"/><circle cx="454.6" cy="403.2" r="1.24" opacity="0.19"/><circle cx="325.6" cy="289.1" r="0.66" opacity="0.10"/><circle cx="500.9" cy="152.6" r="0.86" opacity="0.10"/><circle cx="502.4" cy="54.8" r="0.64" opacity="0.12"/><circle cx="479.9" cy="380.7" r="1.05" opacity="0.23"/><circle cx="123.8" cy="359.3" r="0.61" opacity="0.17"/><circle cx="78.8" cy="136.3" r="0.93" opacity="0.16"/><circle cx="106.9" cy="108.2" r="0.60" opacity="0.12"/><circle cx="128.9" cy="103.5" r="0.63" opacity="0.13"/><circle cx="401.6" cy="26.6" r="0.84" opacity="0.13"/><circle cx="407.3" cy="57.2" r="0.84" opacity="0.12"/><circle cx="401.8" cy="263.1" r="0.90" opacity="0.13"/><circle cx="247.8" cy="267.0" r="0.84" opacity="0.16"/><circle cx="307.5" cy="232.1" r="1.79" opacity="0.30"/><circle cx="237.7" cy="177.5" r="0.52" opacity="0.09"/><circle cx="520.5" cy="55.3" r="1.14" opacity="0.29"/><circle cx="40.4" cy="131.8" r="0.90" opacity="0.16"/><circle cx="183.4" cy="74.6" r="0.77" opacity="0.08"/><circle cx="508.1" cy="279.9" r="0.86" opacity="0.11"/><circle cx="251.8" cy="240.8" r="0.70" opacity="0.08"/><circle cx="104.4" cy="395.9" r="1.08" opacity="0.25"/><circle cx="457.9" cy="60.3" r="0.55" opacity="0.09"/><circle cx="56.6" cy="91.3" r="0.59" opacity="0.13"/><circle cx="325.7" cy="370.1" r="1.15" opacity="0.22"/><circle cx="479.6" cy="70.3" r="0.83" opacity="0.16"/><circle cx="110.0" cy="162.6" r="0.67" opacity="0.13"/><circle cx="208.2" cy="343.8" r="1.10" opacity="0.22"/><circle cx="148.8" cy="329.9" r="1.41" opacity="0.28"/><circle cx="365.6" cy="283.7" r="0.72" opacity="0.10"/><circle cx="101.6" cy="249.9" r="0.75" opacity="0.18"/><circle cx="367.5" cy="204.8" r="0.81" opacity="0.19"/><circle cx="437.0" cy="257.8" r="0.58" opacity="0.09"/><circle cx="332.5" cy="234.6" r="0.88" opacity="0.22"/><circle cx="470.3" cy="199.9" r="0.58" opacity="0.19"/><circle cx="366.6" cy="119.5" r="1.10" opacity="0.21"/><circle cx="217.3" cy="310.5" r="0.76" opacity="0.09"/><circle cx="367.3" cy="117.3" r="0.98" opacity="0.19"/><circle cx="281.4" cy="169.1" r="0.87" opacity="0.10"/><circle cx="403.9" cy="298.8" r="1.06" opacity="0.21"/><circle cx="180.9" cy="204.0" r="0.58" opacity="0.14"/><circle cx="100.5" cy="202.3" r="0.62" opacity="0.10"/><circle cx="316.5" cy="370.7" r="0.75" opacity="0.17"/><circle cx="462.8" cy="294.0" r="0.58" opacity="0.20"/><circle cx="156.5" cy="5.4" r="0.97" opacity="0.19"/><circle cx="166.8" cy="110.3" r="1.02" opacity="0.21"/><circle cx="219.3" cy="359.2" r="0.73" opacity="0.09"/><circle cx="78.7" cy="261.6" r="0.53" opacity="0.16"/><circle cx="478.2" cy="278.0" r="0.82" opacity="0.21"/><circle cx="79.1" cy="129.0" r="1.22" opacity="0.17"/><circle cx="368.0" cy="376.8" r="0.78" opacity="0.15"/><circle cx="122.7" cy="91.8" r="0.77" opacity="0.09"/><circle cx="325.0" cy="168.6" r="0.89" opacity="0.13"/><circle cx="248.3" cy="163.7" r="0.59" opacity="0.15"/><circle cx="427.5" cy="39.0" r="1.14" opacity="0.15"/><circle cx="369.8" cy="173.1" r="0.54" opacity="0.15"/><circle cx="271.9" cy="337.2" r="0.78" opacity="0.18"/><circle cx="115.7" cy="10.7" r="0.55" opacity="0.09"/><circle cx="168.2" cy="231.7" r="0.76" opacity="0.21"/><circle cx="53.4" cy="240.5" r="0.77" opacity="0.14"/><circle cx="73.3" cy="133.8" r="0.69" opacity="0.21"/><circle cx="185.8" cy="146.6" r="1.11" opacity="0.16"/><circle cx="410.1" cy="156.6" r="1.12" opacity="0.27"/><circle cx="468.6" cy="219.5" r="0.91" opacity="0.19"/><circle cx="438.2" cy="3.5" r="0.90" opacity="0.18"/><circle cx="450.9" cy="33.1" r="0.74" opacity="0.14"/><circle cx="219.4" cy="340.7" r="0.52" opacity="0.16"/><circle cx="505.5" cy="356.5" r="0.62" opacity="0.21"/><circle cx="21.0" cy="106.3" r="1.21" opacity="0.20"/><circle cx="475.5" cy="47.8" r="0.53" opacity="0.11"/><circle cx="99.3" cy="2.7" r="0.70" opacity="0.11"/><circle cx="340.8" cy="22.6" r="0.71" opacity="0.13"/><circle cx="478.4" cy="54.6" r="0.68" opacity="0.13"/><circle cx="509.2" cy="246.5" r="0.68" opacity="0.14"/><circle cx="497.4" cy="344.4" r="0.56" opacity="0.16"/><circle cx="66.9" cy="151.3" r="0.78" opacity="0.22"/><circle cx="333.6" cy="245.6" r="0.68" opacity="0.14"/><circle cx="221.2" cy="116.1" r="0.80" opacity="0.21"/><circle cx="429.5" cy="267.9" r="0.62" opacity="0.20"/><circle cx="508.7" cy="236.1" r="0.77" opacity="0.11"/><circle cx="372.4" cy="157.3" r="1.06" opacity="0.25"/><circle cx="290.8" cy="230.5" r="0.88" opacity="0.18"/><circle cx="219.6" cy="217.8" r="1.16" opacity="0.24"/><circle cx="501.5" cy="50.5" r="0.75" opacity="0.14"/><circle cx="503.8" cy="417.0" r="0.75" opacity="0.18"/><circle cx="364.1" cy="156.3" r="1.02" opacity="0.16"/><circle cx="347.6" cy="279.8" r="0.70" opacity="0.22"/><circle cx="422.6" cy="175.4" r="1.10" opacity="0.20"/><circle cx="338.3" cy="337.7" r="1.13" opacity="0.25"/><circle cx="209.6" cy="17.4" r="0.55" opacity="0.21"/><circle cx="189.6" cy="260.8" r="0.96" opacity="0.27"/><circle cx="170.3" cy="34.7" r="0.66" opacity="0.21"/><circle cx="232.6" cy="40.7" r="0.51" opacity="0.14"/><circle cx="373.5" cy="22.1" r="0.69" opacity="0.20"/><circle cx="507.6" cy="377.2" r="0.73" opacity="0.10"/><circle cx="320.2" cy="71.5" r="0.83" opacity="0.16"/><circle cx="379.8" cy="200.6" r="0.70" opacity="0.16"/><circle cx="126.4" cy="364.4" r="1.39" opacity="0.21"/><circle cx="424.3" cy="311.1" r="0.73" opacity="0.11"/><circle cx="451.3" cy="253.2" r="0.56" opacity="0.13"/><circle cx="247.4" cy="155.9" r="0.58" opacity="0.18"/><circle cx="483.8" cy="363.7" r="0.82" opacity="0.09"/><circle cx="109.8" cy="303.3" r="0.53" opacity="0.19"/><circle cx="103.0" cy="79.7" r="0.83" opacity="0.07"/><circle cx="458.9" cy="131.4" r="0.69" opacity="0.09"/><circle cx="501.2" cy="75.8" r="1.21" opacity="0.21"/><circle cx="502.2" cy="27.1" r="0.69" opacity="0.08"/><circle cx="422.5" cy="227.0" r="1.00" opacity="0.14"/><circle cx="465.6" cy="89.8" r="0.55" opacity="0.16"/><circle cx="242.6" cy="85.4" r="0.64" opacity="0.19"/><circle cx="80.5" cy="98.4" r="0.75" opacity="0.19"/><circle cx="337.4" cy="366.3" r="0.87" opacity="0.07"/><circle cx="62.2" cy="44.7" r="1.08" opacity="0.29"/><circle cx="509.9" cy="410.4" r="0.64" opacity="0.21"/><circle cx="383.1" cy="84.5" r="0.51" opacity="0.07"/><circle cx="334.1" cy="310.1" r="1.16" opacity="0.16"/><circle cx="386.0" cy="422.9" r="0.69" opacity="0.11"/><circle cx="33.3" cy="269.5" r="0.94" opacity="0.27"/><circle cx="469.5" cy="151.8" r="0.95" opacity="0.19"/><circle cx="296.2" cy="379.1" r="0.54" opacity="0.21"/><circle cx="298.9" cy="335.7" r="0.63" opacity="0.08"/><circle cx="97.7" cy="188.4" r="0.76" opacity="0.20"/><circle cx="174.8" cy="398.9" r="0.64" opacity="0.10"/><circle cx="500.0" cy="283.1" r="0.77" opacity="0.13"/><circle cx="220.2" cy="330.0" r="0.61" opacity="0.15"/><circle cx="473.1" cy="37.1" r="1.15" opacity="0.17"/><circle cx="346.1" cy="267.7" r="1.09" opacity="0.19"/><circle cx="262.9" cy="102.5" r="0.66" opacity="0.09"/><circle cx="121.4" cy="148.4" r="0.73" opacity="0.18"/><circle cx="135.5" cy="239.1" r="0.59" opacity="0.09"/><circle cx="502.0" cy="401.8" r="0.96" opacity="0.16"/><circle cx="54.6" cy="129.5" r="0.50" opacity="0.13"/><circle cx="360.5" cy="359.4" r="0.50" opacity="0.19"/><circle cx="198.8" cy="135.2" r="0.61" opacity="0.11"/><circle cx="134.4" cy="100.3" r="0.83" opacity="0.12"/><circle cx="217.7" cy="208.4" r="1.17" opacity="0.30"/><circle cx="90.6" cy="347.2" r="0.73" opacity="0.15"/><circle cx="300.6" cy="138.7" r="0.50" opacity="0.21"/><circle cx="463.6" cy="198.3" r="0.84" opacity="0.15"/><circle cx="246.0" cy="275.4" r="0.59" opacity="0.19"/><circle cx="384.2" cy="424.0" r="0.89" opacity="0.20"/><circle cx="265.5" cy="384.5" r="0.53" opacity="0.19"/><circle cx="74.0" cy="222.1" r="1.14" opacity="0.18"/><circle cx="411.6" cy="18.4" r="0.86" opacity="0.15"/><circle cx="158.2" cy="429.8" r="1.18" opacity="0.28"/><circle cx="489.0" cy="247.4" r="1.08" opacity="0.18"/><circle cx="145.5" cy="112.8" r="0.75" opacity="0.13"/><circle cx="476.1" cy="22.0" r="0.97" opacity="0.19"/><circle cx="153.0" cy="412.6" r="0.69" opacity="0.10"/><circle cx="24.9" cy="158.4" r="1.06" opacity="0.25"/><circle cx="460.5" cy="20.5" r="0.67" opacity="0.10"/><circle cx="200.3" cy="293.7" r="0.78" opacity="0.11"/><circle cx="343.7" cy="74.9" r="1.05" opacity="0.27"/><circle cx="506.0" cy="250.5" r="0.65" opacity="0.22"/><circle cx="341.0" cy="326.9" r="0.88" opacity="0.21"/><circle cx="320.4" cy="254.2" r="0.50" opacity="0.10"/><circle cx="376.9" cy="365.2" r="1.21" opacity="0.14"/><circle cx="15.0" cy="110.0" r="0.73" opacity="0.21"/><circle cx="470.1" cy="45.8" r="0.77" opacity="0.17"/><circle cx="215.3" cy="101.9" r="1.22" opacity="0.25"/><circle cx="284.4" cy="14.2" r="0.60" opacity="0.11"/><circle cx="113.0" cy="287.9" r="0.57" opacity="0.21"/><circle cx="0.3" cy="411.9" r="0.76" opacity="0.11"/><circle cx="361.6" cy="377.7" r="0.55" opacity="0.19"/><circle cx="130.4" cy="45.5" r="0.57" opacity="0.10"/><circle cx="148.4" cy="36.4" r="1.10" opacity="0.24"/><circle cx="152.7" cy="334.1" r="1.25" opacity="0.15"/><circle cx="162.4" cy="38.6" r="0.76" opacity="0.16"/><circle cx="185.4" cy="415.3" r="0.90" opacity="0.13"/><circle cx="337.2" cy="42.8" r="0.76" opacity="0.10"/><circle cx="326.5" cy="57.0" r="0.74" opacity="0.14"/><circle cx="79.2" cy="82.0" r="0.76" opacity="0.13"/><circle cx="105.0" cy="145.6" r="0.56" opacity="0.16"/><circle cx="246.3" cy="140.3" r="0.87" opacity="0.08"/><circle cx="60.2" cy="126.6" r="1.23" opacity="0.26"/><circle cx="107.9" cy="361.7" r="0.54" opacity="0.09"/><circle cx="294.6" cy="255.8" r="0.88" opacity="0.18"/><circle cx="389.0" cy="74.5" r="1.22" opacity="0.27"/><circle cx="42.2" cy="307.7" r="0.71" opacity="0.11"/><circle cx="404.3" cy="347.7" r="1.01" opacity="0.26"/><circle cx="45.2" cy="293.4" r="0.50" opacity="0.09"/><circle cx="341.4" cy="424.0" r="0.76" opacity="0.16"/><circle cx="440.0" cy="417.9" r="1.02" opacity="0.15"/><circle cx="467.1" cy="120.2" r="1.20" opacity="0.17"/><circle cx="101.4" cy="182.1" r="1.20" opacity="0.30"/><circle cx="142.8" cy="268.5" r="1.03" opacity="0.23"/><circle cx="117.5" cy="369.2" r="0.69" opacity="0.17"/><circle cx="166.9" cy="350.3" r="0.67" opacity="0.18"/><circle cx="348.7" cy="305.9" r="1.18" opacity="0.21"/><circle cx="336.7" cy="372.3" r="0.76" opacity="0.15"/><circle cx="210.8" cy="51.3" r="0.80" opacity="0.20"/><circle cx="516.0" cy="325.2" r="1.19" opacity="0.17"/><circle cx="361.1" cy="374.6" r="1.00" opacity="0.25"/><circle cx="203.9" cy="186.5" r="1.14" opacity="0.16"/><circle cx="335.1" cy="25.7" r="0.83" opacity="0.21"/><circle cx="132.9" cy="329.5" r="0.70" opacity="0.12"/><circle cx="43.9" cy="186.7" r="0.84" opacity="0.09"/><circle cx="150.4" cy="1.8" r="0.61" opacity="0.19"/><circle cx="490.9" cy="92.7" r="0.71" opacity="0.14"/><circle cx="501.7" cy="409.5" r="0.66" opacity="0.15"/><circle cx="339.9" cy="228.6" r="0.93" opacity="0.21"/><circle cx="434.3" cy="73.6" r="0.75" opacity="0.09"/><circle cx="285.2" cy="53.6" r="0.63" opacity="0.19"/><circle cx="319.6" cy="262.2" r="0.66" opacity="0.22"/><circle cx="311.3" cy="270.9" r="0.60" opacity="0.16"/><circle cx="499.9" cy="303.2" r="0.82" opacity="0.10"/><circle cx="311.4" cy="82.4" r="0.81" opacity="0.14"/><circle cx="316.4" cy="303.8" r="0.67" opacity="0.12"/><circle cx="277.2" cy="106.0" r="0.82" opacity="0.12"/><circle cx="377.1" cy="292.9" r="0.81" opacity="0.12"/><circle cx="1.9" cy="365.7" r="1.16" opacity="0.29"/><circle cx="213.5" cy="183.7" r="0.85" opacity="0.11"/><circle cx="396.7" cy="412.5" r="0.51" opacity="0.09"/><circle cx="337.5" cy="93.2" r="0.93" opacity="0.28"/><circle cx="185.1" cy="396.6" r="0.54" opacity="0.17"/><circle cx="156.5" cy="405.1" r="0.99" opacity="0.22"/><circle cx="287.8" cy="333.1" r="0.73" opacity="0.15"/><circle cx="307.5" cy="239.4" r="0.65" opacity="0.13"/><circle cx="520.1" cy="225.1" r="0.66" opacity="0.18"/><circle cx="356.8" cy="34.8" r="0.68" opacity="0.20"/><circle cx="139.8" cy="394.9" r="0.91" opacity="0.22"/><circle cx="278.6" cy="272.0" r="0.97" opacity="0.27"/><circle cx="4.7" cy="359.1" r="0.51" opacity="0.19"/><circle cx="507.8" cy="283.5" r="1.04" opacity="0.18"/><circle cx="347.6" cy="348.5" r="0.65" opacity="0.11"/><circle cx="138.5" cy="373.4" r="0.51" opacity="0.10"/><circle cx="410.4" cy="245.7" r="1.14" opacity="0.28"/><circle cx="306.8" cy="9.4" r="0.66" opacity="0.09"/><circle cx="162.2" cy="118.4" r="1.78" opacity="0.27"/><circle cx="220.3" cy="178.0" r="0.68" opacity="0.09"/><circle cx="278.3" cy="351.9" r="0.78" opacity="0.19"/><circle cx="478.4" cy="184.0" r="0.86" opacity="0.14"/><circle cx="142.8" cy="294.5" r="1.24" opacity="0.20"/><circle cx="138.6" cy="107.8" r="0.59" opacity="0.21"/><circle cx="331.7" cy="21.6" r="0.57" opacity="0.22"/><circle cx="179.0" cy="347.5" r="0.58" opacity="0.21"/><circle cx="39.5" cy="215.8" r="0.64" opacity="0.18"/><circle cx="446.8" cy="98.8" r="0.69" opacity="0.14"/><circle cx="330.7" cy="333.7" r="0.88" opacity="0.14"/><circle cx="14.9" cy="181.8" r="0.57" opacity="0.20"/><circle cx="312.0" cy="224.2" r="0.55" opacity="0.11"/><circle cx="335.5" cy="294.3" r="0.51" opacity="0.19"/><circle cx="363.4" cy="293.9" r="0.84" opacity="0.21"/><circle cx="305.1" cy="186.3" r="0.82" opacity="0.17"/><circle cx="405.9" cy="133.2" r="0.59" opacity="0.16"/><circle cx="7.8" cy="230.0" r="1.22" opacity="0.22"/><circle cx="456.4" cy="86.3" r="0.72" opacity="0.12"/><circle cx="206.8" cy="258.1" r="1.20" opacity="0.19"/><circle cx="304.6" cy="271.5" r="0.73" opacity="0.14"/><circle cx="423.3" cy="8.6" r="0.96" opacity="0.17"/><circle cx="351.3" cy="196.0" r="0.53" opacity="0.08"/><circle cx="140.0" cy="41.5" r="0.58" opacity="0.13"/><circle cx="220.2" cy="303.7" r="1.12" opacity="0.17"/></g></pattern>
</defs>
<rect width="1164" height="890" fill="url(#st1)"/>
<rect width="1164" height="890" fill="url(#st2)"/>
<g fill="#c3caee"><ellipse cx="140.4" cy="17.6" rx="2.4" ry="1.9" opacity=".33"/><ellipse cx="181.8" cy="17.6" rx="2.0" ry="1.6" opacity=".33"/><ellipse cx="260.3" cy="53.8" rx="2.2" ry="1.8" opacity=".33"/><ellipse cx="487.8" cy="65.2" rx="2.6" ry="2.1" opacity=".33"/><ellipse cx="104.7" cy="184.7" rx="2.2" ry="1.8" opacity=".33"/><ellipse cx="308.4" cy="179.9" rx="2.2" ry="1.8" opacity=".33"/><ellipse cx="348.9" cy="241.8" rx="2.0" ry="1.6" opacity=".33"/><ellipse cx="19.0" cy="175.0" rx="1.8" ry="1.4" opacity=".33"/><ellipse cx="684.0" cy="222.0" rx="2.2" ry="1.8" opacity=".33"/><ellipse cx="793.0" cy="338.0" rx="2.0" ry="1.6" opacity=".33"/><ellipse cx="813.0" cy="532.0" rx="2.2" ry="1.8" opacity=".33"/><ellipse cx="971.0" cy="118.0" rx="2.0" ry="1.6" opacity=".33"/></g>
</svg>
<svg class="mascot" width="1500" height="935" viewBox="0 0 1500 935">
<defs>
<path id="gear" d="M455.1,608.3 L494.1,605.8 L502.3,594.8 L482.1,580.3 L504.2,571.2 L537.6,580.3 L550,572 L619,572 L631.4,580.3 L664.3,571.2 L686.5,580.3 L666.2,594.8 L674.9,605.8 L713.6,608.3 L713.6,622.3 L674.9,625.7 L666.2,637.3 L686.5,649.3 L664.3,659 L633.3,649.9 L606.3,654.7 L601.4,671.2 L567.6,671.2 L562.8,654.7 L535.7,649.9 L504.8,659 L482.1,649.3 L502.3,637.3 L494.1,625.7 L455.1,622.3 Z"/>
<g id="legsL">
<path d="M533.3,536 L535.6,570 C536,576 536.5,580 536.8,588 C536.8,593 531,596 524,598 C519,599.5 514,600.5 510.2,601 C520,602.2 531,602.5 537.4,601.5 C542,600.5 545,598.5 546.5,595 C548.5,590.5 549,585 549.5,578 L551.2,536 Z"/>
<path d="M551.4,536 L552.7,580 C553,588 553.5,592 553.3,597 C553,601 551,603 548,604.6 C543,607 533,609 523.2,609.7 C532,610.8 542,611 549.9,610.4 C554,610 557.5,609 560,607.2 C563,605 564,601 564.2,597 L564.8,580 L566.3,545 L566.3,536 Z"/>
<path d="M566.7,540 L567.8,580 L567.8,602 C567.8,607 566.5,610.5 563.5,612.9 C559,616 552,618 548.7,618.5 C544,619.5 539,620 535.7,620.2 C545,621.3 556,621.5 563.5,620.8 C567,620.4 570,619.3 572.5,617.4 C575.5,615 577,611.5 578.2,608.3 C580,603 581.5,597 582.7,591.3 L584.5,583.4 L584.6,540 Z"/>
</g>
<g id="legs"><use href="#legsL"/><use href="#legsL" transform="translate(1169 0) scale(-1 1)"/></g>
<clipPath id="holeclip"><ellipse cx="584.1" cy="614" rx="70" ry="31.2"/></clipPath>
</defs>
<!-- ground shadow -->
<g transform="translate(0 689.3) scale(1 .854) translate(0 -608.3)" fill="#1b1f4a" opacity=".095"><use href="#gear"/></g>
<ellipse cx="584.4" cy="699" rx="69.8" ry="22.2" fill="#4b5385" opacity=".6"/>
<ellipse cx="584.5" cy="698.5" rx="52.2" ry="17.5" fill="#1b1f4a" opacity=".085"/>
<ellipse cx="583.5" cy="696" rx="21.2" ry="7.8" fill="#5a6396" opacity=".35"/>
<!-- gear -->
<use href="#gear" transform="translate(0 7)" fill="#6d719b"/>
<use href="#gear" fill="#878896"/>
<ellipse cx="584.1" cy="614" rx="70" ry="31.2" fill="#62668a"/>
<g clip-path="url(#holeclip)">
<ellipse cx="584.1" cy="621.5" rx="70" ry="31.2" fill="#363c6a"/>
<ellipse cx="584.7" cy="619.6" rx="53" ry="21.6" fill="#5b5c77"/>
<ellipse cx="584.7" cy="615.1" rx="53" ry="21.6" fill="#6a6b82"/>
<ellipse cx="584.4" cy="619" rx="16.4" ry="6" fill="#3d4473"/>
<use href="#legs" transform="translate(4.5 5)" fill="#2e335e" opacity=".6"/>
</g>
<!-- helmet -->
<rect x="457" y="390.7" width="11.2" height="56.1" rx="5.3" fill="#6266a7"/>
<rect x="700.6" y="390.7" width="11.2" height="56.1" rx="5.3" fill="#6266a7"/>
<circle cx="584.4" cy="413.6" r="116.3" fill="#4b5489"/>
<circle cx="585.2" cy="414.4" r="112.9" fill="#455d8b"/>
<path d="M537,335 A93.7,93.7 0 0 0 507,475.7" fill="none" stroke="#5b729e" stroke-width="7.6" stroke-linecap="round"/>
<circle cx="547.4" cy="327.6" r="5.5" fill="#8b9cbe"/>
<!-- side spikes -->
<path d="M540,528.5 L533,528.5 C528,537 518,541.5 505.4,542.7 C518,544 528,545 535,549 L540,549 Z" fill="#f0794b"/>
<path d="M629,528.5 L636.5,528.5 C641.5,537 652,541.5 665.2,542.7 C652,544 641.5,545 634.5,549 L629,549 Z" fill="#ef764a"/>
<!-- legs -->
<use href="#legs" fill="#f0794b"/>
<rect x="558" y="536" width="53" height="16" fill="#f0794b"/><rect x="580" y="540" width="9" height="42" fill="#f0794b"/>
<!-- body -->
<path d="M528.7,400.6 A56.05,56.05 0 0 1 640.8,400.6 L639.6,465 L635.1,541 L534.1,541 L529.8,465 Z" fill="#f0794b"/>
<!-- shade -->
<path d="M590,344.8 A56.05,56.05 0 0 1 640.8,400.6 L640.4,425 L606,425 C607,388 602,362 590,344.8 Z" fill="#ed6e45"/>
<circle cx="561.6" cy="371.9" r="7.9" fill="#f8a780"/>
<!-- band -->
<path d="M532.9,522 Q584.7,549 636.6,522 L636,531 Q584.7,557.5 533.4,531 Z" fill="#ed7048"/>
<!-- eyes -->
<circle cx="545.1" cy="433" r="33.6" fill="#e96a4a"/>
<circle cx="624.2" cy="433" r="33.6" fill="#e96a4a"/>
<circle cx="544.8" cy="433.4" r="27.1" fill="#fff"/>
<circle cx="623.8" cy="433.4" r="27.1" fill="#fff"/>
<circle cx="544.6" cy="428.3" r="8.3" fill="#050505"/>
<circle cx="624.5" cy="428.3" r="8.3" fill="#050505"/>
<!-- mouth -->
<path d="M563.5,483.4 Q584.5,502.6 605.3,484.1 C604.5,497 597.2,515.9 584.7,515.9 C572,515.9 564.5,497 563.5,483.4 Z" fill="#050505"/>
<path d="M563.5,483.4 Q584.5,502.6 605.3,484.1 C605.1,486.5 604.8,488.5 604.4,490.3 Q584.5,516.2 564.7,490 C564.2,488 563.8,486 563.5,483.4 Z" fill="#fff"/>
</svg>

<div class="h1w"><h1><span class="w1">Let's</span> <span class="w2">get</span> <span class="w3">stuff</span> <span class="w4">deployed!</span></h1></div>
<div class="edge"></div>
</div>
<div class="right">
  <svg class="logo" width="328" height="130" viewBox="0 0 328 130"><text transform="translate(164.9 71.2) scale(1.07 1)" x="0" y="0" text-anchor="middle" font-family="Liberation Sans, sans-serif" font-size="48.5" fill="#ef7b35" stroke="#ef7b35" stroke-width="1.3" stroke-linejoin="round" letter-spacing="-1">argo</text></svg>
  <div class="lab" style="top:119.5px;letter-spacing:.2px">Username</div>
  <div class="val" style="top:144px">admin</div>
  <div class="ul" style="top:173px;background:#c6c6c6"></div>
  <div class="lab" style="top:206.5px;color:#1fa3bb;letter-spacing:.5px">Password</div>
  <div class="pw"><span>•••••••••••••••••••••••••••••••••••</span>
</div>
  <svg style="position:absolute;left:240px;top:224px" width="40" height="36"><rect x="6.4" y="4.9" width="1.65" height="22.7" fill="#111"/><circle cx="16.1" cy="13" r="3.2" fill="#000"/><circle cx="16.1" cy="11.6" r=".5" fill="#8a8a8a"/><path d="M14.8,13 L14.6,21.6 a1.5,1.5 0 0 0 3,0 L17.4,13 Z" fill="#000"/><path d="M21.2,14.6 l3.3,3.7 l3.9,-3.7" fill="none" stroke="#000" stroke-width="1.3"/></svg>
  <div class="ul" style="top:260px;background:#0f9ab0"></div>
  <div class="sign">SIGN IN</div>
  <svg style="position:absolute;left:0;top:840px" width="328" height="50"><text transform="translate(170.6 28.4) scale(1.1 1)" text-anchor="middle" font-family="Liberation Sans, sans-serif" font-size="17.3" fill="#6b6b6b" stroke="#6b6b6b" stroke-width=".5" stroke-linejoin="round" letter-spacing="-.3">argo</text></svg>
</div>
</div>
</body>
</html>
